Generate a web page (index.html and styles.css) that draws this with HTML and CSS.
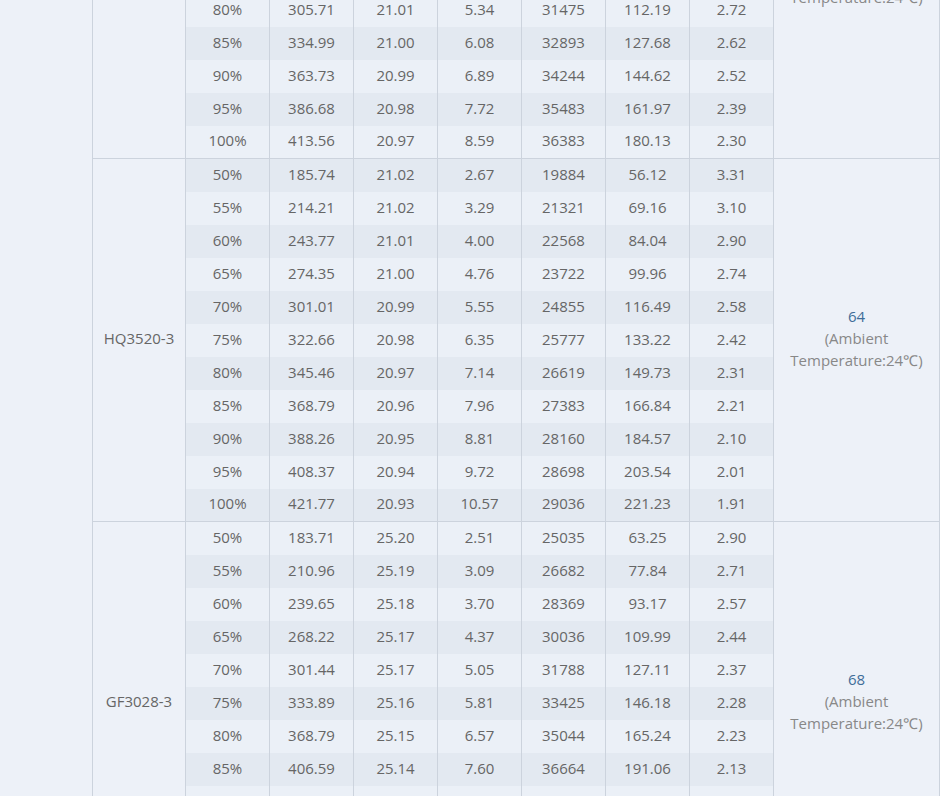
FILE: index.html
```html
<!DOCTYPE html>
<html>
<head>
<meta charset="utf-8">
<link rel="stylesheet" href="styles.css">
</head>
<body>
<table class="perf">
<colgroup>
<col class="c-model"><col class="c-data"><col class="c-data"><col class="c-data"><col class="c-data"><col class="c-data"><col class="c-data"><col class="c-data"><col class="c-temp">
</colgroup>
<tbody>
<tr><td class="model" rowspan="11">GF3025-3</td><td>50%</td><td>170.25</td><td>21.05</td><td>2.40</td><td>20312</td><td>50.52</td><td>3.37</td><td class="temp" rowspan="11"><span class="tval">62</span><br>(Ambient<br>Temperature:24℃)</td></tr>
<tr><td>55%</td><td>195.62</td><td>21.04</td><td>2.93</td><td>22540</td><td>61.65</td><td>3.17</td></tr>
<tr><td>60%</td><td>221.48</td><td>21.03</td><td>3.51</td><td>24780</td><td>73.82</td><td>3.00</td></tr>
<tr><td>65%</td><td>248.17</td><td>21.03</td><td>4.13</td><td>26905</td><td>86.86</td><td>2.86</td></tr>
<tr><td>70%</td><td>263.90</td><td>21.02</td><td>4.63</td><td>28613</td><td>97.32</td><td>2.77</td></tr>
<tr><td>75%</td><td>283.45</td><td>21.02</td><td>4.96</td><td>30110</td><td>104.26</td><td>2.75</td></tr>
<tr><td>80%</td><td>305.71</td><td>21.01</td><td>5.34</td><td>31475</td><td>112.19</td><td>2.72</td></tr>
<tr><td>85%</td><td>334.99</td><td>21.00</td><td>6.08</td><td>32893</td><td>127.68</td><td>2.62</td></tr>
<tr><td>90%</td><td>363.73</td><td>20.99</td><td>6.89</td><td>34244</td><td>144.62</td><td>2.52</td></tr>
<tr><td>95%</td><td>386.68</td><td>20.98</td><td>7.72</td><td>35483</td><td>161.97</td><td>2.39</td></tr>
<tr class="grp-last"><td>100%</td><td>413.56</td><td>20.97</td><td>8.59</td><td>36383</td><td>180.13</td><td>2.30</td></tr>

<tr><td class="model" rowspan="11">HQ3520-3</td><td>50%</td><td>185.74</td><td>21.02</td><td>2.67</td><td>19884</td><td>56.12</td><td>3.31</td><td class="temp" rowspan="11"><span class="tval">64</span><br>(Ambient<br>Temperature:24℃)</td></tr>
<tr><td>55%</td><td>214.21</td><td>21.02</td><td>3.29</td><td>21321</td><td>69.16</td><td>3.10</td></tr>
<tr><td>60%</td><td>243.77</td><td>21.01</td><td>4.00</td><td>22568</td><td>84.04</td><td>2.90</td></tr>
<tr><td>65%</td><td>274.35</td><td>21.00</td><td>4.76</td><td>23722</td><td>99.96</td><td>2.74</td></tr>
<tr><td>70%</td><td>301.01</td><td>20.99</td><td>5.55</td><td>24855</td><td>116.49</td><td>2.58</td></tr>
<tr><td>75%</td><td>322.66</td><td>20.98</td><td>6.35</td><td>25777</td><td>133.22</td><td>2.42</td></tr>
<tr><td>80%</td><td>345.46</td><td>20.97</td><td>7.14</td><td>26619</td><td>149.73</td><td>2.31</td></tr>
<tr><td>85%</td><td>368.79</td><td>20.96</td><td>7.96</td><td>27383</td><td>166.84</td><td>2.21</td></tr>
<tr><td>90%</td><td>388.26</td><td>20.95</td><td>8.81</td><td>28160</td><td>184.57</td><td>2.10</td></tr>
<tr><td>95%</td><td>408.37</td><td>20.94</td><td>9.72</td><td>28698</td><td>203.54</td><td>2.01</td></tr>
<tr class="grp-last"><td>100%</td><td>421.77</td><td>20.93</td><td>10.57</td><td>29036</td><td>221.23</td><td>1.91</td></tr>

<tr><td class="model" rowspan="11">GF3028-3</td><td>50%</td><td>183.71</td><td>25.20</td><td>2.51</td><td>25035</td><td>63.25</td><td>2.90</td><td class="temp" rowspan="11"><span class="tval">68</span><br>(Ambient<br>Temperature:24℃)</td></tr>
<tr><td>55%</td><td>210.96</td><td>25.19</td><td>3.09</td><td>26682</td><td>77.84</td><td>2.71</td></tr>
<tr><td>60%</td><td>239.65</td><td>25.18</td><td>3.70</td><td>28369</td><td>93.17</td><td>2.57</td></tr>
<tr><td>65%</td><td>268.22</td><td>25.17</td><td>4.37</td><td>30036</td><td>109.99</td><td>2.44</td></tr>
<tr><td>70%</td><td>301.44</td><td>25.17</td><td>5.05</td><td>31788</td><td>127.11</td><td>2.37</td></tr>
<tr><td>75%</td><td>333.89</td><td>25.16</td><td>5.81</td><td>33425</td><td>146.18</td><td>2.28</td></tr>
<tr><td>80%</td><td>368.79</td><td>25.15</td><td>6.57</td><td>35044</td><td>165.24</td><td>2.23</td></tr>
<tr><td>85%</td><td>406.59</td><td>25.14</td><td>7.60</td><td>36664</td><td>191.06</td><td>2.13</td></tr>
<tr><td>90%</td><td>441.20</td><td>25.13</td><td>8.62</td><td>38105</td><td>216.54</td><td>2.04</td></tr>
<tr><td>95%</td><td>468.35</td><td>25.12</td><td>9.58</td><td>39320</td><td>240.62</td><td>1.95</td></tr>
<tr class="grp-last"><td>100%</td><td>492.18</td><td>25.11</td><td>10.49</td><td>40215</td><td>263.40</td><td>1.87</td></tr>
</tbody>
</table>
</body>
</html>
```
FILE: styles.css
```css
html, body {
  margin: 0;
  padding: 0;
  background: #edf1f8;
}
body {
  font-family: "Open Sans", "Liberation Sans", sans-serif;
  font-size: 15px;
  color: #666;
  overflow: hidden;
}
.perf {
  border-collapse: collapse;
  table-layout: fixed;
  width: 847px;
  margin: -204px 0 0 92px;
}
.c-model { width: 93px; }
.c-data { width: 84px; }
.c-temp { width: 166px; }
.perf td {
  height: 29px;
  padding: 0 0 4px 0;
  text-align: center;
  vertical-align: middle;
  border-left: 1px solid #ccd3dd;
  border-right: 1px solid #ccd3dd;
  line-height: 22px;
  background: #ebf0f7;
}
.perf tr:nth-child(even) td {
  background: #e3e9f1;
}
.perf tr.grp-last td {
  height: 28px;
  border-bottom: 1px solid #ccd3dd;
}
.perf td.model,
.perf td.temp {
  border-bottom: 1px solid #ccd3dd;
}
.perf td.model,
.perf td.temp,
.perf tr:nth-child(even) td.model,
.perf tr:nth-child(even) td.temp {
  background: #edf1f8;
}
.perf td.temp {
  color: #888;
}
.tval {
  color: #3f6d99;
}
```
